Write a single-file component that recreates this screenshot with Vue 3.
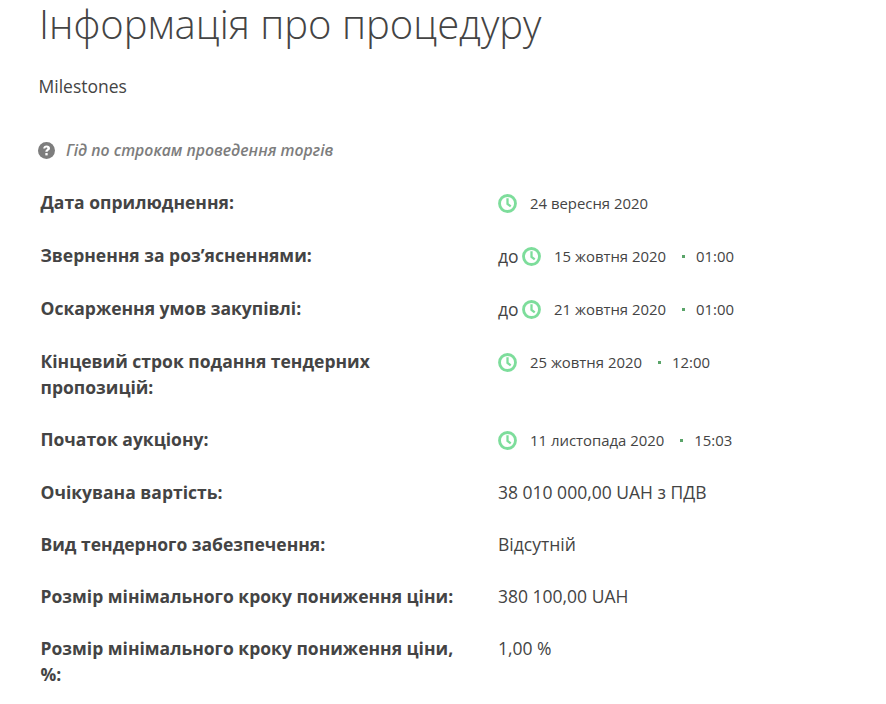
<script setup>
const rows = [
  { label: 'Дата оприлюднення:', date: '24 вересня 2020', h: 53 },
  { label: 'Звернення за роз’ясненнями:', pre: 'до', date: '15 жовтня 2020', time: '01:00', h: 53 },
  { label: 'Оскарження умов закупівлі:', pre: 'до', date: '21 жовтня 2020', time: '01:00', h: 53 },
  { label: 'Кінцевий строк подання тендерних пропозицій:', date: '25 жовтня 2020', time: '12:00', h: 78 },
  { label: 'Початок аукціону:', date: '11 листопада 2020', time: '15:03', h: 53 },
  { label: 'Очікувана вартість:', text: '38 010 000,00 UAH з ПДВ', h: 52 },
  { label: 'Вид тендерного забезпечення:', text: 'Відсутній', h: 52 },
  { label: 'Розмір мінімального кроку пониження ціни:', text: '380 100,00 UAH', h: 52 },
  { label: 'Розмір мінімального кроку пониження ціни, %:', text: '1,00 %', h: 78 }
]
</script>

<template>
  <div class="page">
    <h1 class="title">Інформація про процедуру</h1>
    <div class="sub">Milestones</div>
    <div class="guide">
      <svg class="q" viewBox="0 0 16 16" width="17" height="17">
        <circle cx="8" cy="8" r="8" fill="#7d7d7d" />
        <path d="M4.9 6C5 4.2 6.3 3.2 8.1 3.2c1.8 0 3.2 1 3.2 2.6 0 1.1-.7 1.7-1.4 2.2-.5.3-.8.6-.8 1.2H6.9c0-1.1.4-1.7 1.1-2.2.5-.4.9-.7.9-1.1 0-.5-.4-.8-1-.8-.7 0-1 .4-1.1 1z" fill="#fff" />
        <rect x="6.9" y="10.4" width="2.2" height="2.2" fill="#fff" />
      </svg>
      <em>Гід по строкам проведення торгів</em>
    </div>
    <div class="rows">
      <div v-for="r in rows" :key="r.label" class="row" :style="{ height: r.h + 'px' }">
        <div class="label">{{ r.label }}</div>
        <div v-if="r.date" class="value dated">
          <span v-if="r.pre" class="pre">{{ r.pre }}</span>
          <svg class="clock" viewBox="0 0 20 20" width="19" height="19">
            <circle cx="10" cy="10" r="8.4" fill="none" stroke="#7ddd9b" stroke-width="3" />
            <path d="M10 4.6v5.8l3.4 2.6" fill="none" stroke="#7ddd9b" stroke-width="2.4" />
          </svg>
          <span class="date">{{ r.date }}</span>
          <template v-if="r.time">
            <span class="dot"></span>
            <span class="time">{{ r.time }}</span>
          </template>
        </div>
        <div v-else class="value">{{ r.text }}</div>
      </div>
    </div>
  </div>
</template>

<style scoped>
.page {
  width: 886px;
  height: 704px;
  overflow: hidden;
  box-sizing: border-box;
  padding-left: 39px;
  font-family: "Open Sans", "Noto Sans", sans-serif;
  color: #444;
  background: #fff;
}
.title {
  margin: 0;
  font-size: 40px;
  font-weight: 300;
  line-height: 48px;
  color: #444;
}
.sub {
  margin-top: 25px;
  margin-left: -0.5px;
  font-size: 17.5px;
  line-height: 26px;
}
.guide {
  margin-top: 38px;
  margin-left: -1px;
  display: flex;
  align-items: center;
  height: 26px;
  font-size: 15.75px;
  font-weight: 600;
  color: #7d7d7d;
}
.guide em {
  margin-left: 11px;
  font-style: italic;
}
.q {
  flex: none;
}
.rows {
  margin-top: 26px;
  padding-left: 1.5px;
}
.row {
  display: flex;
  align-items: flex-start;
}
.label {
  width: 457.5px;
  padding-right: 30px;
  box-sizing: border-box;
  font-size: 17.5px;
  font-weight: 700;
  line-height: 26px;
  color: #444;
}
.value {
  display: flex;
  align-items: center;
  height: 26px;
  font-size: 17.5px;
}
.dated {
  margin-top: 1px;
}
.pre {
  margin-right: 3.5px;
}
.clock {
  flex: none;
}
.date {
  margin-left: 13px;
  font-size: 14.9px;
}
.dot {
  width: 3px;
  height: 3px;
  margin-left: 16px;
  background: #5aa469;
}
.time {
  margin-left: 11px;
  font-size: 14.9px;
}
</style>
